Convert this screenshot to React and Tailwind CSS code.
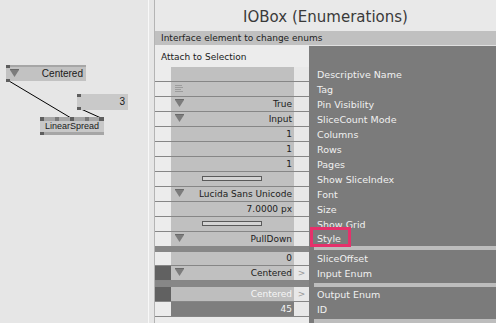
import React from "react";

const sans = { fontFamily: '"DejaVu Sans", Verdana, sans-serif' };
const arial = { fontFamily: '"Liberation Sans", Arial, sans-serif' };

function Tri({ className = "" }) {
  return (
    <svg width="9" height="8" viewBox="0 0 9 8" className={className}>
      <rect x="0" y="0" width="9" height="1" fill="#6a6a6a" />
      <polygon points="0,1 9,1 4.5,8" fill="#7c7c7c" />
    </svg>
  );
}

function TagIcon() {
  return (
    <svg width="8" height="8" viewBox="0 0 8 8" className="absolute left-[4px] top-[3px]">
      <rect x="0" y="0" width="7" height="1" fill="#9c9c9c" />
      <rect x="0" y="2" width="8" height="1" fill="#9c9c9c" />
      <rect x="0" y="4" width="6" height="1" fill="#9c9c9c" />
      <rect x="0" y="6" width="8" height="1" fill="#9c9c9c" />
    </svg>
  );
}

function Row({ label, value, tri, toggle, tag, strip, variant, arrow, tall = true, border = true, children }) {
  const valueBg =
    variant === "dark" ? "bg-[#7e7e7e] text-[#f4f4f4]" : variant === "out" ? "bg-[#bebebe] text-[#f6f6f6]" : "bg-[#c0c0c0] text-[#1c1c1c]";
  return (
    <div className={tall ? "flex h-[15px]" : "flex h-[14px]"}>
      <div className={border ? "flex w-[154px] border-b border-[#868686]" : "flex w-[154px]"}>
        <div className={strip ? "w-[16px] bg-[#616161]" : "w-[16px] bg-[#ececec]"} />
        <div className={`relative flex w-[123px] items-center justify-end pr-[2px] text-[9px] ${valueBg}`}>
          {tri && <Tri className="absolute left-[4px] top-[2px]" />}
          {tag && <TagIcon />}
          {toggle && <div className="absolute left-[31px] top-[4px] h-[5px] w-[60px] border border-[#5a5a5a] bg-[#d4d4d4]" />}
          {value && <span className="leading-none">{value}</span>}
        </div>
        <div className="flex w-[15px] items-center justify-center bg-[#e8e8e8] text-[9px] text-[#9a9a9a]">
          {arrow && <span className="leading-none">&gt;</span>}
        </div>
      </div>
      <div className="relative flex flex-1 items-center bg-[#7b7b7b] pl-[8px] text-[9.5px] text-[#f0f0f0]">
        <span className="leading-none">{label}</span>
        {children}
      </div>
    </div>
  );
}

function Band({ bar }) {
  return (
    <div className="flex h-[6px]">
      <div className="w-[154px] bg-[#878787]" />
      <div className="flex-1 bg-[#7b7b7b] pl-[5px]">
        <div className={`${bar} bg-[#bdbdbd]`} />
      </div>
    </div>
  );
}

function Pin({ className }) {
  return <div className={`absolute h-[3px] w-[4px] bg-[#5e5e5e] ${className}`} />;
}

function Canvas() {
  return (
    <div className="relative h-[323px] w-[148px] bg-[#e6e6e6]" style={arial}>
      <svg className="absolute left-0 top-0" width="148" height="323">
        <line x1="9" y1="81" x2="71" y2="118" stroke="#000" strokeWidth="1" />
        <line x1="81" y1="109" x2="101" y2="118" stroke="#000" strokeWidth="1" />
      </svg>

      {/* enum iobox */}
      <div className="absolute left-[6px] top-[65px] flex h-[16px] w-[80px] items-center justify-end border-t-2 border-[#a6a6a6] bg-[#c2c2c2] pr-[3px] text-[10px] text-[#1a1a1a]">
        <Tri className="absolute left-[4px] top-[2px]" />
        <span className="leading-none">Centered</span>
        <Pin className="left-0 top-[-2px]" />
        <Pin className="bottom-[-1px] left-0" />
      </div>

      {/* value iobox */}
      <div className="absolute left-[77px] top-[94px] flex h-[16px] w-[51px] items-center justify-end bg-[#c9c9c9] pr-[3px] text-[10px] text-[#1a1a1a]">
        <span className="leading-none">3</span>
        <Pin className="left-0 top-0" />
        <Pin className="bottom-0 left-0" />
      </div>

      {/* LinearSpread node */}
      <div className="absolute left-[40px] top-[117px] flex h-[18px] w-[64px] flex-col bg-[#c8c8c8]">
        <div className="relative h-[4px] bg-[#a6a6a6]">
          <div className="absolute left-0 top-0 h-[4px] w-[4px] bg-[#5e5e5e]" />
          <div className="absolute left-[15px] top-0 h-[4px] w-[4px] bg-[#7a7a7a]" />
          <div className="absolute left-[30px] top-0 h-[4px] w-[4px] bg-[#5e5e5e]" />
          <div className="absolute left-[45px] top-0 h-[4px] w-[4px] bg-[#7a7a7a]" />
          <div className="absolute left-[59px] top-0 h-[4px] w-[5px] bg-[#5e5e5e]" />
        </div>
        <div className="flex flex-1 items-center justify-center text-[9px] text-[#1a1a1a]">
          <span className="leading-none">LinearSpread</span>
        </div>
        <div className="relative h-[3px] bg-[#a6a6a6]">
          <div className="absolute left-0 top-0 h-[3px] w-[4px] bg-[#5e5e5e]" />
        </div>
      </div>
    </div>
  );
}

export default function App() {
  return (
    <div className="flex h-[323px] w-[496px] overflow-hidden bg-[#e6e6e6]" style={sans}>
      <Canvas />
      <div className="w-[1px] bg-[#f8f8f8]" />
      <div className="w-[6px] border-r border-[#b4b4b4] bg-[#e6e6e6]" />

      <div className="flex flex-1 flex-col">
        {/* HEADER */}
        <div className="flex h-[31px] items-center justify-center bg-[#e9e9e9] pt-[3px] text-[15px] text-[#3a3a3a]">
          IOBox (Enumerations)
        </div>
        <div className="flex h-[14px] items-center bg-[#c0c0c0] pl-[6px] text-[9px] text-[#222]">
          <span className="leading-none">Interface element to change enums</span>
        </div>

        {/* ATTACH */}
        <div className="flex h-[22px]">
          <div className="flex w-[154px] items-center bg-[#ececec] pl-[6px] pt-[2px] text-[9px] text-[#1a1a1a]">
            <span className="leading-none">Attach to Selection</span>
          </div>
          <div className="flex-1 border-t border-[#e0e0e0] bg-[#7b7b7b]" />
        </div>

        <Row label="Descriptive Name" />
        <Row label="Tag" tag />
        <Row label="Pin Visibility" tri value="True" />
        <Row label="SliceCount Mode" tri value="Input" />
        <Row label="Columns" value="1" />
        <Row label="Rows" value="1" />
        <Row label="Pages" value="1" />
        <Row label="Show SliceIndex" toggle />
        <Row label="Font" tri value="Lucida Sans Unicode" />
        <Row label="Size" value="7.0000 px" />
        <Row label="Show Grid" toggle />
        <Row label="Style" tri value="PullDown" tall={false} border={false}>
          <div className="absolute left-[1px] top-[-5px] h-[20px] w-[41px] border-[3px] border-[#e5316b]" />
        </Row>
        <Band bar="mt-[0px] h-[4px]" />
        <Row label="SliceOffset" value="0" tall={false} />
        <Row label="Input Enum" tri value="Centered" strip arrow />
        <Band bar="mt-[2px] h-[4px]" />
        <Row label="Output Enum" value="Centered" strip arrow variant="out" />
        <Row label="ID" value="45" variant="dark" />

        {/* BOTTOM */}
        <div className="flex flex-1">
          <div className="w-[154px] bg-[#ececec]" />
          <div className="flex flex-1 flex-col bg-[#7b7b7b] pl-[5px] pt-[2px]">
            <div className="flex-1 bg-[#bdbdbd]" />
          </div>
        </div>
      </div>
    </div>
  );
}
